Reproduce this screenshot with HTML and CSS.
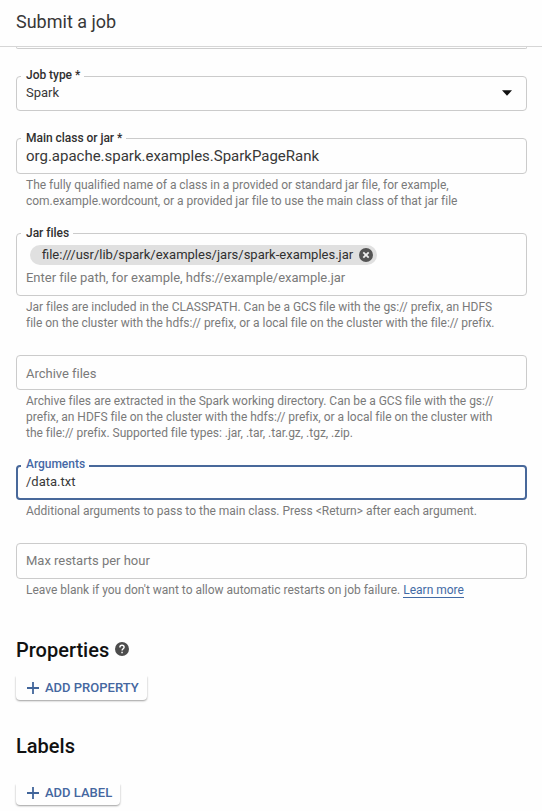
FILE: index.html
```html
<!DOCTYPE html>
<html lang="en">
<head>
<meta charset="utf-8">
<title>Submit a job</title>
<link rel="stylesheet" href="styles.css">
</head>
<body>
<header class="header"><h1>Submit a job</h1></header>
<main class="form">
  <div class="previous-field"></div>
  <section class="field field-type">
    <div class="box"><span class="label">Job type *</span><span class="value small">Spark</span>
      <svg class="arrow" width="10" height="6" viewBox="0 0 10 6"><path d="M0 .2h10L5 5.8z"/></svg>
    </div>
  </section>
  <section class="field field-main">
    <div class="box"><span class="label">Main class or jar *</span><span class="value">org.apache.spark.examples.SparkPageRank</span></div>
    <p class="hint">The fully qualified name of a class in a provided or standard jar file, for example,<br>com.example.wordcount, or a provided jar file to use the main class of that jar file</p>
  </section>
  <section class="field field-jars">
    <div class="box"><span class="label">Jar files</span>
      <span class="chip"><span class="chip-text">file:///usr/lib/spark/examples/jars/spark-examples.jar</span>
        <svg width="14" height="14" viewBox="0 0 14 14"><circle cx="7" cy="7" r="7" fill="#545454"/><path d="M4.3 4.3l5.4 5.4m0-5.4l-5.4 5.4" stroke="#eee" stroke-width="1.8"/></svg>
      </span>
      <span class="placeholder">Enter file path, for example, hdfs://example/example.jar</span>
    </div>
    <p class="hint">Jar files are included in the CLASSPATH. Can be a GCS file with the gs:// prefix, an HDFS<br>file on the cluster with the hdfs:// prefix, or a local file on the cluster with the file:// prefix.</p>
  </section>
  <section class="field field-archive">
    <div class="box"><span class="placeholder">Archive files</span></div>
    <p class="hint">Archive files are extracted in the Spark working directory. Can be a GCS file with the gs://<br>prefix, an HDFS file on the cluster with the hdfs:// prefix, or a local file on the cluster with<br>the file:// prefix. Supported file types: .jar, .tar, .tar.gz, .tgz, .zip.</p>
  </section>
  <section class="field field-args">
    <div class="box focused"><span class="label">Arguments</span><span class="value small">/data.txt</span></div>
    <p class="hint">Additional arguments to pass to the main class. Press &lt;Return&gt; after each argument.</p>
  </section>
  <section class="field field-restarts">
    <div class="box"><span class="placeholder">Max restarts per hour</span></div>
    <p class="hint">Leave blank if you don't want to allow automatic restarts on job failure. <a class="link">Learn more</a></p>
  </section>
  <section class="group group-properties">
    <h2>Properties
      <svg width="14" height="14" viewBox="0 0 14 14"><circle cx="7" cy="7" r="7" fill="#4c4c4c"/><path d="M4.9 5.4c0-1.3.9-2.1 2.1-2.1s2.1.8 2.1 1.9c0 1.5-2 1.6-2 3.3" fill="none" stroke="#fff" stroke-width="1.4"/><path d="M6.3 9.7h1.5v1.5H6.3z" fill="#fff"/></svg>
    </h2>
    <button class="button"><svg width="12" height="12" viewBox="0 0 12 12"><path d="M6 0v12M0 6h12"/></svg><span>ADD PROPERTY</span></button>
  </section>
  <section class="group group-labels">
    <h2>Labels</h2>
    <button class="button"><svg width="12" height="12" viewBox="0 0 12 12"><path d="M6 0v12M0 6h12"/></svg><span>ADD LABEL</span></button>
  </section>
</main>
</body>
</html>
```
FILE: styles.css
```css
* { box-sizing: border-box; }
body {
  margin: 0;
  height: 811px;
  overflow: hidden;
  background: #fefefe;
  color: #383838;
  font-family: Roboto, "Liberation Sans", sans-serif;
  font-size: 13px;
}
h1, h2, p { margin: 0; }
svg { flex-shrink: 0; }
.header {
  height: 47px;
  padding: 10px 16px 0;
  border-bottom: 1px solid #d6d6d6;
}
h1 { font-size: 18px; line-height: 24px; font-weight: 400; }
.form { padding: 0 15px 0 16px; }
.previous-field {
  height: 2px;
  border: 1px solid #cecece;
  border-top: 0;
  border-radius: 0 0 4px 4px;
}
.box {
  position: relative;
  display: flex;
  align-items: center;
  height: 35px;
  padding: 0 9px;
  border: 1px solid #cbcbcb;
  border-radius: 4px;
}
.label {
  position: absolute;
  top: -9px;
  left: 4px;
  padding: 0 4px 0 5px;
  background: #fefefe;
  color: #303030;
  font-size: 12px;
  line-height: 16px;
  font-weight: 500;
  letter-spacing: -.03px;
  white-space: nowrap;
}
.value { font-size: 15px; line-height: 20px; letter-spacing: -.01px; white-space: nowrap; }
.small { font-size: 13px; }
.placeholder { color: #7a7a7a; line-height: 18px; letter-spacing: -.02px; white-space: nowrap; }
.hint {
  padding: 3px 0 0 10px;
  color: #7a7a7a;
  font-size: 12px;
  line-height: 16px;
  letter-spacing: -.018px;
  white-space: nowrap;
}
.field-type { margin-top: 27px; }
.field-type .box { justify-content: space-between; padding-right: 14px; padding-bottom: 1px; }
.field-type .label { top: -10px; }
.arrow { fill: #111; }
.field-main { margin-top: 27px; }
.field-main .box, .field-restarts .box { height: 36px; }
.field-jars { margin-top: 24px; }
.field-jars .box {
  height: 63px;
  flex-direction: column;
  align-items: flex-start;
  padding-top: 11px;
}
.chip {
  display: flex;
  align-items: center;
  justify-content: space-between;
  width: 347px;
  height: 20px;
  margin-left: 4px;
  padding: 0 4px 0 12px;
  border-radius: 10px;
  background: #e0e0e0;
  color: #303030;
  white-space: nowrap;
}
.chip-text { padding-bottom: 2px; }
.field-jars .placeholder { margin-top: 4px; }
.field-archive { margin-top: 24px; }
.field-archive .box { padding-top: 2px; }
.field-args { margin-top: 24px; }
.field-args .hint { letter-spacing: -.012px; }
.box.focused { padding: 0 8px 2px; border: 2px solid #48689a; }
.focused .label { top: -11px; left: 3px; color: #4568a5; }
.field-restarts { margin-top: 24px; }
.field-restarts .hint { letter-spacing: -.006px; }
.link { color: #426aa5; border-bottom: 1px solid #426aa5; }
.group h2 {
  display: flex;
  align-items: center;
  gap: 6px;
  height: 28px;
  color: #111;
  font-size: 20px;
  line-height: 28px;
  font-weight: 500;
}
.group h2 svg { margin-bottom: 2px; }
.group-properties { margin-top: 38px; }
.group-labels { margin-top: 32px; }
.button {
  display: flex;
  align-items: center;
  gap: 6px;
  height: 24px;
  margin: 12px 0 0;
  padding: 0 8px 0 11px;
  border: 0;
  border-radius: 0 0 4px 4px;
  background: #fefefe;
  box-shadow: 0 1px 2px rgba(0, 0, 0, .38);
  clip-path: inset(0 -3px -4px -3px);
  color: #4567a0;
  font: 500 13px/24px Roboto, "Liberation Sans", sans-serif;
}
.group-labels .button { height: 21px; margin-top: 24px; padding-bottom: 4px; }
.button svg { stroke: #41659a; stroke-width: 1.8; }
```
